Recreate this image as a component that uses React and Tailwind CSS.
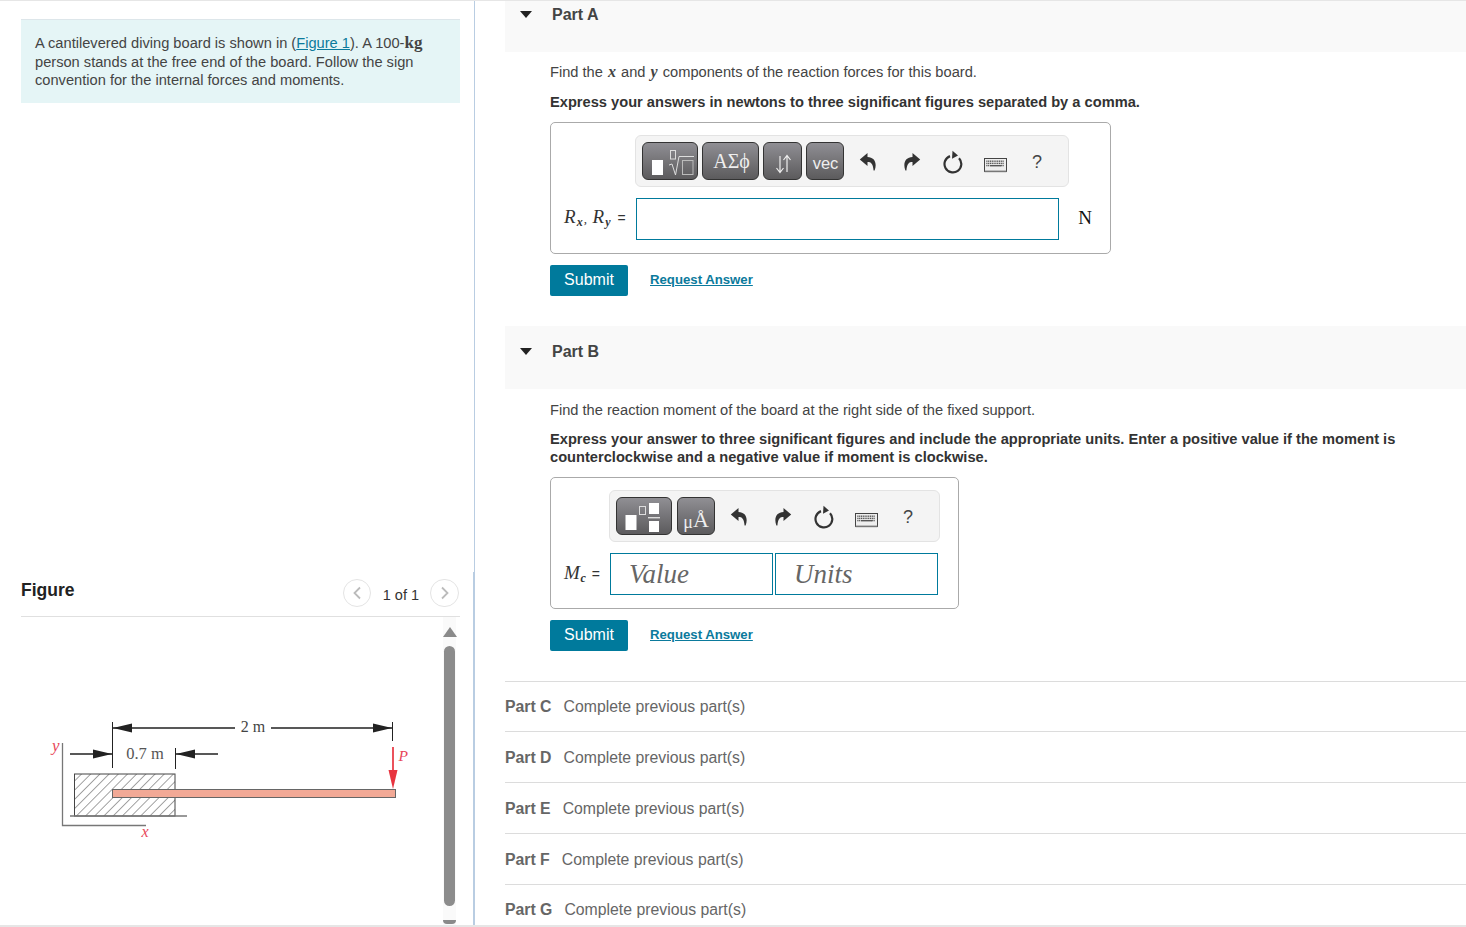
import React from "react";

const sans = "font-['Liberation_Sans',Arial,sans-serif]";

function Undo({ flip }) {
  return (
    <svg width="18" height="20" viewBox="0 0 18 20" className={flip ? "-scale-x-100" : ""}>
      <path d="M8.5 1 L0.8 7.6 L8.5 14 V10 C12 10 14 11.5 14.6 18.5 L15.6 18.5 C18.4 11 15.5 5.2 8.5 5 Z" fill="#333" />
    </svg>
  );
}
function Reset() {
  return (
    <svg width="22" height="24" viewBox="0 0 22 24">
      <path d="M8 6.1 A8.4 8.4 0 1 0 17 8.2" fill="none" stroke="#333" strokeWidth="2.2" />
      <path d="M10.5 0.8 L16 5.6 L10 8.8 Z" fill="#333" />
    </svg>
  );
}
function Keyboard() {
  const keys = [];
  for (let r = 0; r < 3; r++) {
    for (let c = 0; c < 10; c++) {
      if (r === 2 && c > 1 && c < 8) continue;
      keys.push(<rect key={r + "-" + c} x={2.3 + c * 1.8} y={2.5 + r * 2.2} width="1.2" height="1.4" fill="#555" />);
    }
  }
  return (
    <svg width="23" height="15" viewBox="0 0 23 15">
      <rect x="0.5" y="0.5" width="22" height="13" fill="#eee" stroke="#444" />
      {keys}
      <rect x="6" y="7" width="11" height="1.4" fill="#555" />
      <rect x="0.5" y="12.6" width="22" height="1.6" fill="#777" />
    </svg>
  );
}
function Tools() {
  return (
    <div className="flex items-center ml-[4px] pt-[2px]">
      <div className="w-[42px] flex justify-center pr-[2px]"><Undo /></div>
      <div className="w-[42px] flex justify-center pl-[2px]"><Undo flip /></div>
      <div className="w-[42px] flex justify-center"><Reset /></div>
      <div className="w-[42px] flex justify-center pt-[6px]"><Keyboard /></div>
      <div className={"w-[42px] text-center text-[18px] text-[#444] " + sans}>?</div>
    </div>
  );
}
function Btn({ w, children }) {
  return (
    <div className={"h-[38px] shrink-0 rounded-[6px] border border-[#333] bg-gradient-to-b from-[#908f94] to-[#5c5b5d] flex items-center justify-center text-[#eee] overflow-hidden " + w}>
      {children}
    </div>
  );
}
function Submit() {
  return (
    <div className="mt-[11px] flex items-center h-[31px]">
      <div className="w-[78px] h-[31px] rounded-[2px] bg-[#007a9c] text-white text-[16px] pb-[2px] flex items-center justify-center">Submit</div>
      <span className="ml-[22px] mb-[2px] text-[13.2px] font-bold text-[#0b7a9c] underline">Request Answer</span>
    </div>
  );
}
function Caret() {
  return <div className="w-0 h-0 border-l-[6px] border-r-[6px] border-t-[7px] border-l-transparent border-r-transparent border-t-[#222]" />;
}
function PartRow({ name, h, pt }) {
  return (
    <div className={"flex items-center border-t border-[#dcdcdc] text-[15.8px] " + h + " " + pt}>
      <span className="font-bold text-[#666]">{name}</span>
      <span className="text-[#666] ml-[12px]">Complete previous part(s)</span>
    </div>
  );
}
function Diagram() {
  const ink = "#222";
  return (
    <svg width="370" height="135" viewBox="40 710 370 135" className="ml-[19px] mt-[93px] shrink-0">
      <defs>
        <pattern id="hatch" width="6.5" height="6.5" patternUnits="userSpaceOnUse" patternTransform="rotate(45)">
          <line x1="0" y1="0" x2="0" y2="6.5" stroke="#444" strokeWidth="1" />
        </pattern>
      </defs>
      <path d="M62.5 743 V825.5 H146" fill="none" stroke="#777" strokeWidth="1.3" />
      <rect x="74.5" y="774" width="100.5" height="42" fill="url(#hatch)" stroke="#444" />
      <line x1="70" y1="816" x2="187" y2="816" stroke="#777" strokeWidth="1.3" />
      <rect x="112.5" y="789.5" width="283" height="8" fill="#f2a996" stroke="#666" />
      <line x1="112.5" y1="722" x2="112.5" y2="768" stroke={ink} />
      <line x1="392.5" y1="722" x2="392.5" y2="741" stroke={ink} />
      <line x1="175.5" y1="748" x2="175.5" y2="769" stroke={ink} />
      <path d="M112 728 H235 M271 728 H392" stroke={ink} strokeWidth="1.6" />
      <path d="M113 728 L132 723.5 V732.5 Z M392 728 L373 723.5 V732.5 Z" fill={ink} />
      <path d="M70 754 H112 M175 754 H218" stroke={ink} strokeWidth="1.6" />
      <path d="M112 754 L93 749.5 V758.5 Z M176 754 L195 749.5 V758.5 Z" fill={ink} />
      <line x1="393" y1="747" x2="393" y2="775" stroke="#e8343f" strokeWidth="1.7" />
      <path d="M393 789 L388.5 770 H397.5 Z" fill="#e8343f" />
      <text x="253" y="731.5" textAnchor="middle" fontFamily="Liberation Serif" fontSize="16" fill="#444">2 m</text>
      <text x="145" y="758.5" textAnchor="middle" fontFamily="Liberation Serif" fontSize="16.5" fill="#555">0.7 m</text>
      <text x="52" y="751" fontFamily="Liberation Serif" fontStyle="italic" fontSize="17" fill="#e8475a">y</text>
      <text x="398.5" y="761" fontFamily="Liberation Serif" fontStyle="italic" fontSize="15.5" fill="#e8475a">P</text>
      <text x="145" y="837" textAnchor="middle" fontFamily="Liberation Serif" fontStyle="italic" fontSize="16" fill="#e8475a">x</text>
    </svg>
  );
}

export default function App() {
  const serif = "font-['Liberation_Serif',serif]";
  const mathVar = "italic font-bold text-[16px] px-[1px] " + serif;
  return (
    <div className={"w-[1466px] h-[927px] overflow-hidden bg-white border-t border-[#e6e6e6] " + sans}>
      <div className="flex h-[924px] border-b-2 border-[#e6e6e6] box-content">
        <div className="w-[475px] shrink-0 flex flex-col">
          <div className="h-[571px] border-r border-[#b9cde2] pl-[21px] pr-[14px] pt-[18px]">
            <div className="h-[84px] border-t border-[#dde6ea] bg-[#e5f5f6] pl-[14px] pr-[30px] pt-[14px] text-[14.65px] leading-[18.5px] text-[#444]">
              A cantilevered diving board is shown in (<span className="text-[#0b7a9c] underline">Figure 1</span>). A 100-<span className={"font-bold text-[17px] " + serif}>kg</span> person stands at the free end of the board. Follow the sign convention for the internal forces and moments.
            </div>
          </div>
          <div className="flex-1 border-r-2 border-[#b9cde2] pl-[21px] pr-[13px] min-h-0 overflow-hidden flex flex-col">
            <div className="h-[45px] shrink-0 border-b border-[#e0e0e0] flex relative">
              <span className="mt-[7px] text-[17.5px] font-bold text-[#222] leading-[22px]">Figure</span>
              <div className="ml-auto mt-[7px] flex items-center h-[28px]">
                <div className="w-[28px] h-[28px] rounded-full border border-[#e4e4e4] flex items-center justify-center">
                  <svg width="10" height="14" viewBox="0 0 10 14"><path d="M8 1.5 L2.5 7 L8 12.5" fill="none" stroke="#bbb" strokeWidth="1.8" /></svg>
                </div>
                <span className="ml-[12px] mt-[5px] text-[14.5px] text-[#333]">1 of 1</span>
                <div className="ml-[11px] mr-[1px] w-[29px] h-[28px] rounded-full border border-[#e4e4e4] flex items-center justify-center">
                  <svg width="10" height="14" viewBox="0 0 10 14"><path d="M2 1.5 L7.5 7 L2 12.5" fill="none" stroke="#bbb" strokeWidth="1.8" /></svg>
                </div>
              </div>
            </div>
            <div className="flex flex-1 min-h-0">
              <div className="w-[422px] shrink-0"><Diagram /></div>
              <div className="w-[13px] shrink-0 bg-[#fafafa] flex flex-col items-center">
                <div className="mt-[10px] w-0 h-0 border-l-[7px] border-r-[7px] border-b-[10px] border-l-transparent border-r-transparent border-b-[#8a8a8a]" />
                <div className="mt-[9px] w-[11px] h-[260px] rounded-[6px] bg-[#8c8c8c]" />
                <div className="mt-[14px] w-[13px] h-[4px] rounded-b-[4px] bg-[#8a8a8a]" />
              </div>
            </div>
          </div>
        </div>

        <div className="flex-1 min-w-0 pl-[30px] overflow-hidden text-[#333]">
          <div className="h-[51px] bg-[#f9f9f9] flex items-start">
            <div className="flex items-center h-[26px] pl-[15px]">
              <Caret />
              <span className="ml-[20px] mt-[1px] text-[16px] font-bold text-[#444]">Part A</span>
            </div>
          </div>

          <div className="pl-[45px] pr-[60px]">
            <p className="mt-[11px] text-[14.65px] leading-[18px] text-[#444]">
              Find the <span className={mathVar}>x</span> and <span className={mathVar}>y</span> components of the reaction forces for this board.
            </p>
            <p className="mt-[12px] text-[14.65px] leading-[18px] font-bold text-[#333]">
              Express your answers in newtons to three significant figures separated by a comma.
            </p>

            <div className="mt-[11px] w-[561px] h-[132px] rounded-[5px] border border-[#aaa] flex flex-col">
              <div className="mt-[12px] ml-[84px] w-[434px] h-[52px] rounded-[6px] border border-[#e3e3e3] bg-[#f4f4f4] flex items-center pl-[6px]">
                <div className="flex gap-[4px]">
                  <Btn w="w-[56px]">
                    <svg width="54" height="36" viewBox="0 0 54 36">
                      <rect x="9" y="17" width="11" height="15" fill="#fff" />
                      <rect x="27.5" y="7.5" width="5" height="8.5" fill="none" stroke="#ddd" />
                      <path d="M26 22 L29 21 L32.5 32 L36 13.5 H51" fill="none" stroke="#ddd" />
                      <rect x="39.5" y="17.5" width="10.5" height="14" fill="none" stroke="#bbb" />
                    </svg>
                  </Btn>
                  <Btn w={"w-[57px] text-[20px] pl-[2px] " + serif}>ΑΣϕ</Btn>
                  <Btn w="w-[39px]">
                    <svg width="20" height="24" viewBox="0 0 20 24" className="mt-[6px]">
                      <path d="M7 4 V20 M3.5 16 L7 20.5 L10.5 16 M14 20 V4 M10.5 8 L14 3.5 L17.5 8" fill="none" stroke="#eee" strokeWidth="1.2" />
                    </svg>
                  </Btn>
                  <Btn w="w-[38px] text-[16.5px] pt-[4px] pl-[1px]">vec</Btn>
                </div>
                <Tools />
              </div>
              <div className="mt-[11px] flex items-center h-[42px] pl-[13px]">
                <div className={"w-[72px] mb-[3px] text-[19px] text-[#333] tracking-[1.1px] whitespace-nowrap " + serif}>
                  <span className="italic">R</span><sub className="italic font-bold text-[12px]">x</sub><span className="text-[13px]">, </span><span className="italic">R</span><sub className="italic font-bold text-[12px]">y</sub> <span className={"text-[14px] " + sans}>=</span>
                </div>
                <div className="w-[423px] h-[42px] border border-[#007a9c]" />
                <div className={"flex-1 text-center pl-[1px] mb-[2px] text-[19px] font-normal text-[#111] " + serif}>N</div>
              </div>
            </div>
            <Submit />
          </div>

          <div className="mt-[30px] h-[63px] bg-[#f9f9f9] pt-[12px]">
            <div className="flex items-center h-[26px] pl-[15px]">
              <Caret />
              <span className="ml-[20px] mt-[1px] text-[16px] font-bold text-[#444]">Part B</span>
            </div>
          </div>

          <div className="pl-[45px] pr-[60px]">
            <p className="mt-[12px] text-[14.65px] leading-[18px] text-[#444]">
              Find the reaction moment of the board at the right side of the fixed support.
            </p>
            <p className="mt-[11px] text-[14.65px] leading-[18px] font-bold text-[#333]">
              Express your answer to three significant figures and include the appropriate units. Enter a positive value if the moment is counterclockwise and a negative value if moment is clockwise.
            </p>

            <div className="mt-[11px] w-[409px] h-[132px] rounded-[5px] border border-[#aaa] flex flex-col">
              <div className="mt-[12px] ml-[58px] w-[331px] h-[52px] rounded-[6px] border border-[#e3e3e3] bg-[#f4f4f4] flex items-center pl-[6px]">
                <div className="flex gap-[5px]">
                  <Btn w="w-[56px]">
                    <svg width="54" height="36" viewBox="0 0 54 36">
                      <rect x="8.5" y="17" width="11" height="15" fill="#fff" />
                      <rect x="22.5" y="8.5" width="6" height="8" fill="none" stroke="#ddd" />
                      <rect x="32" y="5" width="10" height="11" fill="#fff" />
                      <rect x="31" y="19" width="12" height="1.4" fill="#ddd" />
                      <rect x="32" y="23" width="10" height="11" fill="#fff" />
                    </svg>
                  </Btn>
                  <Btn w={"w-[38px] items-end pb-[1px] text-[#ddd] " + serif}>
                    <span className="text-[18px] leading-[22px]">μ</span><span className="text-[22px] leading-[26px]">Å</span>
                  </Btn>
                </div>
                <Tools />
              </div>
              <div className="mt-[11px] flex items-center h-[42px] pl-[13px]">
                <div className={"w-[46px] mb-[2px] text-[19px] text-[#333] tracking-[0.6px] whitespace-nowrap " + serif}>
                  <span className="italic">M</span><sub className="italic font-bold text-[12px]">c</sub> <span className={"text-[14px] " + sans}>=</span>
                </div>
                <div className={"w-[163px] h-[42px] border border-[#007a9c] pl-[18px] flex items-center italic text-[27px] text-[#666] " + serif}>Value</div>
                <div className={"ml-[2px] w-[163px] h-[42px] border border-[#007a9c] pl-[18px] flex items-center italic text-[27px] text-[#666] " + serif}>Units</div>
              </div>
            </div>
            <Submit />
          </div>

          <div className="mt-[30px]">
            <PartRow name="Part C" h="h-[50px]" pt="" />
            <PartRow name="Part D" h="h-[51px]" pt="pt-[2px]" />
            <PartRow name="Part E" h="h-[51px]" pt="pt-[2px]" />
            <PartRow name="Part F" h="h-[51px]" pt="pt-[2px]" />
            <PartRow name="Part G" h="h-[50px]" pt="" />
          </div>
        </div>
      </div>
    </div>
  );
}
